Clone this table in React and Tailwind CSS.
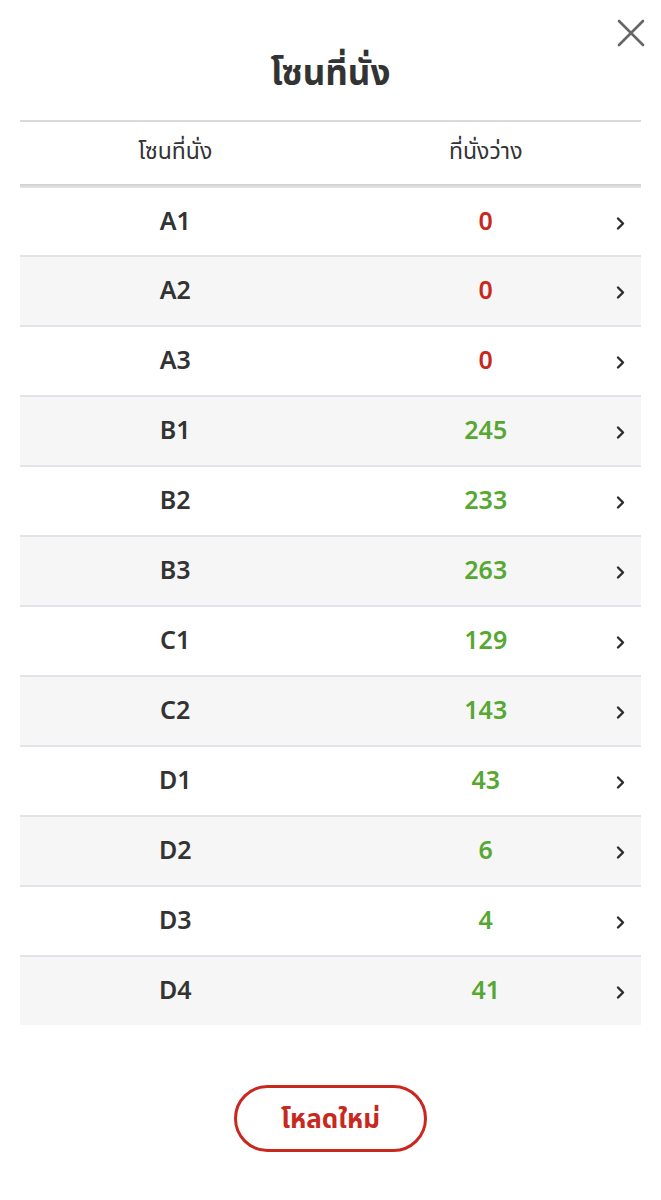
import React from 'react';

const zones = [
  { name: 'A1', seats: 0 },
  { name: 'A2', seats: 0 },
  { name: 'A3', seats: 0 },
  { name: 'B1', seats: 245 },
  { name: 'B2', seats: 233 },
  { name: 'B3', seats: 263 },
  { name: 'C1', seats: 129 },
  { name: 'C2', seats: 143 },
  { name: 'D1', seats: 43 },
  { name: 'D2', seats: 6 },
  { name: 'D3', seats: 4 },
  { name: 'D4', seats: 41 },
];

const Chevron = () => (
  <svg width="11" height="15" viewBox="0 0 11 15" fill="none">
    <path d="M3 2.5 L8 7.5 L3 12.5" stroke="#2b2b2b" strokeWidth="2.4" strokeLinecap="round" strokeLinejoin="round" />
  </svg>
);

export default function App() {
  return (
    <div className="w-[661px] h-[1200px] bg-white relative font-['Noto_Sans','Noto_Sans_Thai',sans-serif] text-[#333]">
      {/* ปุ่มปิด */}
      <button className="absolute right-[15px] top-[18px] w-[30px] h-[30px] flex items-center justify-center">
        <svg width="28" height="28" viewBox="0 0 28 28">
          <path d="M2 2 L26 26 M26 2 L2 26" stroke="#666" strokeWidth="2.6" strokeLinecap="round" />
        </svg>
      </button>

      <h1 className="pt-[50px] h-[120px] text-center text-[35px] font-bold leading-[44px] text-[#333]">โซนที่นั่ง</h1>

      <div className="mx-[20px]">
        <div className="grid grid-cols-2 h-[64px] pb-[5px] border-t-2 border-[#d9d9d9] items-center">
          <div className="text-center text-[23px] text-[#333]">โซนที่นั่ง</div>
          <div className="text-center text-[23px] text-[#333]">ที่นั่งว่าง</div>
        </div>
        <div className="h-[4px] bg-gradient-to-b from-[#cfcfcf] to-[#e6e6e6]" />

        {zones.map((z, i) => (
          <div
            key={z.name}
            className={`relative grid grid-cols-2 items-center ${i > 0 ? 'h-[70px] border-t-2 border-[#e3e3ea]' : 'h-[67px]'} ${i % 2 === 1 ? 'bg-[#f6f6f6]' : 'bg-white'}`}
          >
            <div className="text-center text-[25px] font-semibold text-[#333] -mt-[2px]">{z.name}</div>
            <div className={`text-center text-[25px] font-semibold -mt-[2px] ${z.seats === 0 ? 'text-[#c9271d]' : 'text-[#57a833]'}`}>{z.seats}</div>
            <div className="absolute right-[15px] top-1/2 -translate-y-[40%] flex">
              <Chevron />
            </div>
          </div>
        ))}
      </div>

      <div className="flex justify-center mt-[60px]">
        <button className="w-[193px] h-[67px] rounded-full border-[3px] border-[#c8281e] text-[#c8281e] text-[26px] font-bold">
          โหลดใหม่
        </button>
      </div>
    </div>
  );
}
